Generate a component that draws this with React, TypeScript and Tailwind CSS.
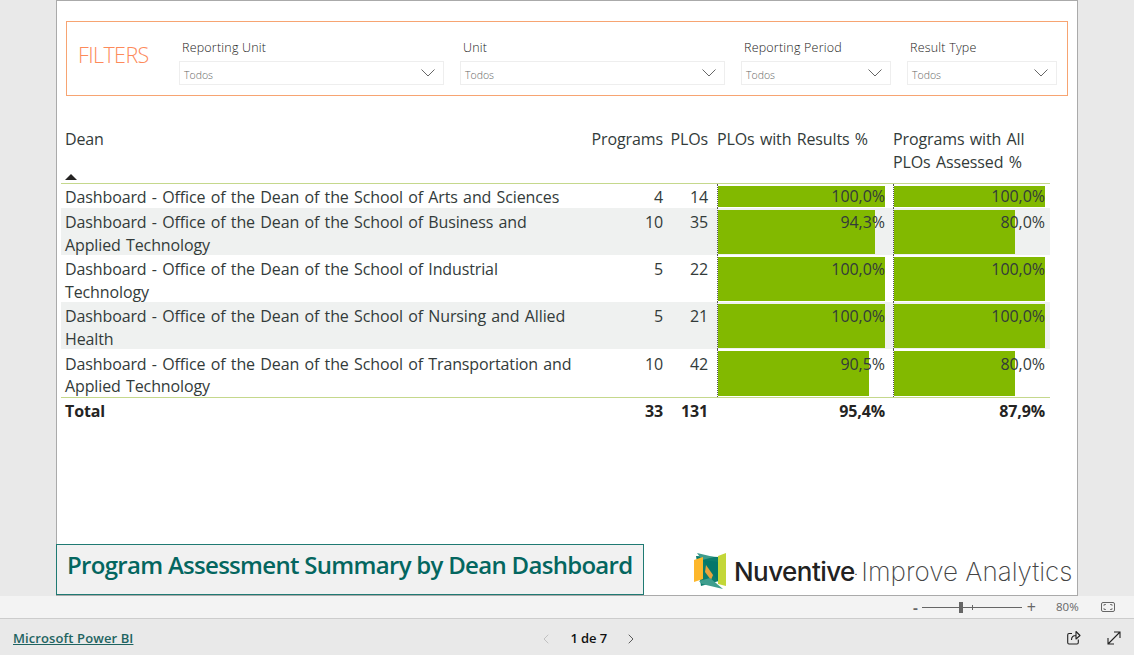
import React from "react";
import { ChevronLeft, ChevronRight } from "lucide-react";

function Slicer({ label, className }: { label: string; className: string }) {
  return (
    <div className={className}>
      <div className="pl-[3px] text-[12.5px] leading-[17px] font-light text-[#252423] h-[25px] pt-[3px] tracking-[0.2px]">{label}</div>
      <div className="h-[24px] border border-[#eeeeee] bg-white flex items-center pl-[4px] pr-[8px] justify-between">
        <span className="text-[10.5px] text-[#666666] font-light pt-[6px]">Todos</span>
        <svg width="14" height="8" viewBox="0 0 14 8"><path d="M0.5 0.5 L7 7 L13.5 0.5" fill="none" stroke="#555" strokeWidth="0.9" /></svg>
      </div>
    </div>
  );
}

function Bar({ pct, text, top }: { pct: number; text: string; top: string }) {
  return (
    <div className="relative h-full pt-[2px] pb-[1px] border-l border-dotted border-[#555555]">
      <div className="h-full bg-[#82b900]" style={{ width: `${pct}%` }} />
      <div className={`absolute inset-x-0 ${top} text-right text-[16px] leading-[25px] text-[#333b3a] tracking-[-0.05px]`}>{text}</div>
    </div>
  );
}

const rows = [
  { name: ["Dashboard - Office of the Dean of the School of Arts and Sciences"], p: "4", l: "14", a: 100, at: "100,0%", b: 100, bt: "100,0%", pad: "pt-[2px]", top: "top-0" },
  { name: ["Dashboard - Office of the Dean of the School of Business and", "Applied Technology"], p: "10", l: "35", a: 94.3, at: "94,3%", b: 80, bt: "80,0%", pad: "pt-[3px]", top: "top-[2px]" },
  { name: ["Dashboard - Office of the Dean of the School of Industrial", "Technology"], p: "5", l: "22", a: 100, at: "100,0%", b: 100, bt: "100,0%", pad: "pt-[3px]", top: "top-[2px]" },
  { name: ["Dashboard - Office of the Dean of the School of Nursing and Allied", "Health"], p: "5", l: "21", a: 100, at: "100,0%", b: 100, bt: "100,0%", pad: "pt-[3px]", top: "top-[2px]" },
  { name: ["Dashboard - Office of the Dean of the School of Transportation and", "Applied Technology"], p: "10", l: "42", a: 90.5, at: "90,5%", b: 80, bt: "80,0%", pad: "pt-[4px]", top: "top-[3px]" },
];

const cols = "grid grid-cols-[530px_72px_45px_9px_168px_8px_152px_5px] grid-rows-[minmax(0,1fr)]";

export default function App() {
  return (
    <div className="w-[1134px] h-[655px] overflow-hidden bg-[#e9e9e9] flex flex-col" style={{ fontFamily: '"Open Sans", sans-serif' }}>
      <div className="h-[596px] px-[56px] shrink-0">
        <div className="h-[596px] w-[1022px] bg-white border border-[#aaaaaa] flex flex-col">
          <div className="mt-[20px] mx-[9px] h-[75px] border border-[#f7a472] flex pl-[11px] pr-[10px] shrink-0">
            <div className="w-[101px] text-[21.5px] font-light text-[#fd8a5a] pt-[18px] leading-[29px] tracking-[-0.6px]">FILTERS</div>
            <div className="flex-1 flex gap-[16px] pt-[14px]">
              <Slicer label="Reporting Unit" className="w-[265px]" />
              <Slicer label="Unit" className="w-[265px]" />
              <Slicer label="Reporting Period" className="w-[150px]" />
              <Slicer label="Result Type" className="w-[150px]" />
            </div>
          </div>

          <div className="mt-[30px] ml-[4px] w-[989px] text-[16px] text-[#333b3a] tracking-[-0.12px] [word-spacing:1.3px]">
            <div className={`${cols} h-[58px] border-b border-[#c5d88c] leading-[23px] relative`}>
              <div className="pl-[4px] pt-[2px]">Dean</div>
              <div className="text-right pt-[2px]">Programs</div>
              <div className="text-right pt-[2px]">PLOs</div>
              <div />
              <div className="pt-[2px] whitespace-nowrap">PLOs with Results %</div>
              <div />
              <div className="pt-[2px] whitespace-nowrap">Programs with All<br />PLOs Assessed %</div>
              <div />
              <svg width="12" height="6" viewBox="0 0 12 6" className="absolute left-[4px] bottom-[3px]"><path d="M0 6 L6 0 L12 6 Z" fill="#252423" /></svg>
            </div>
            {rows.map((r, i) => (
              <div key={i} className={`${cols} ${i % 2 ? "bg-[#eff1f0] " : ""}${i === 0 ? "h-[24px]" : i === 4 ? "h-[48px]" : "h-[47px]"} ${i === 4 ? "leading-[22px]" : "leading-[23px]"}`}>
                <div className={`pl-[4px] ${r.pad} whitespace-nowrap`}>{r.name.map((n, j) => <div key={j}>{n}</div>)}</div>
                <div className={`text-right ${r.pad}`}>{r.p}</div>
                <div className={`text-right ${r.pad}`}>{r.l}</div>
                <div />
                <Bar pct={r.a} text={r.at} top={r.top} />
                <div />
                <Bar pct={r.b} text={r.bt} top={r.top} />
                <div />
              </div>
            ))}
            <div className={`${cols} border-t border-[#c5d88c] h-[27px] pt-[1px] font-bold leading-[25px] text-[#252423]`}>
              <div className="pl-[4px]">Total</div>
              <div className="text-right">33</div>
              <div className="text-right">131</div>
              <div />
              <div className="text-right">95,4%</div>
              <div />
              <div className="text-right">87,9%</div>
              <div />
            </div>
          </div>

          <div className="mt-auto flex items-end -ml-px">
            <div className="w-[588px] h-[51px] bg-[#f1f1f1] border border-[#1f7a73] pl-[10px] pt-[2px] text-[24px] leading-[36px] font-semibold text-[#04665f] tracking-[-0.7px] whitespace-nowrap shrink-0">
              Program Assessment Summary by Dean Dashboard
            </div>
            <div className="flex items-center h-[36px] ml-[50px] mb-[6px]">
              <svg width="32" height="36" viewBox="0 0 32 36" className="shrink-0">
                <path d="M2 3 L25 4 L25 28 L7 33 Z" fill="#0b7d6e" />
                <path d="M3 0 L20 4 L8 7 Z" fill="#3d9c8c" />
                <path d="M0 7 L9 4 L9 26 L0 29 Z" fill="#fdb72b" />
                <path d="M9 7 L24 28 L24 9 Z" fill="#04776b" />
                <path d="M12 12 L19 22 L17 27 L11 19 Z" fill="#e9a33d" />
                <path d="M24 3 L32 0 L32 33 L24 31 Z" fill="#c3d739" />
                <path d="M5 28 L16 25 L29 36 L8 31 Z" fill="#3f9e8e" />
              </svg>
              <span className="ml-[8px] pt-[2px] text-[26px] font-medium text-[#222222] tracking-[-0.55px] leading-[36px]" style={{ fontFamily: "Inter, sans-serif" }}>Nuventive</span>
              <span className="pt-[2px] font-medium text-[#222222] leading-[36px] text-[8px]" style={{ fontFamily: "Inter, sans-serif" }}>.</span>
              <span className="ml-[4px] pt-[2px] text-[26px] font-extralight text-[#444444] tracking-[0.02px] leading-[36px] whitespace-nowrap" style={{ fontFamily: "Inter, sans-serif" }}>Improve Analytics</span>
            </div>
          </div>
        </div>
      </div>

      <div className="h-[23px] bg-[#f3f3f3] border-b border-[#cccccc] flex items-center justify-end shrink-0 text-[#666666] relative">
        <span className="text-[15px] font-bold leading-none">-</span>
        <div className="ml-[4px] w-[100px] h-px bg-[#666666] relative">
          <div className="absolute left-[37px] -top-[5px] w-[4px] h-[11px] bg-[#666666]" />
          <div className="absolute left-[50px] -top-[2px] w-px h-[5px] bg-[#666666]" />
        </div>
        <span className="ml-[5px] text-[16px] leading-none">+</span>
        <span className="ml-[20px] text-[11.5px] w-[24px]">80%</span>
        <svg width="14" height="10" viewBox="0 0 14 10" className="ml-[21px] mr-[19px]">
          <rect x="0.5" y="0.5" width="13" height="9" rx="1.5" fill="none" stroke="#666" />
          <path d="M3 4 V2.5 H5 M9 2.5 H11 V4 M11 6 V7.5 H9 M5 7.5 H3 V6" fill="none" stroke="#666" strokeWidth="0.8" />
        </svg>
      </div>

      <div className="flex-1 flex items-center relative pt-[3px]">
        <a className="ml-[13px] text-[13px] font-semibold text-[#1f6461] underline tracking-[0.1px]">Microsoft Power BI</a>
        <div className="ml-[405px] flex items-center">
          <ChevronLeft size={16} strokeWidth={1.3} className="text-[#bbbbbb]" />
          <span className="ml-[16px] text-[13px] font-semibold text-[#111111] tracking-[-0.1px] w-[38px] whitespace-nowrap">1 de 7</span>
          <ChevronRight size={16} strokeWidth={1.3} className="ml-[15px] text-[#444444]" />
        </div>
        <div className="ml-auto flex items-center mr-[13px] mb-[2px]">
          <svg width="14" height="15" viewBox="0 0 14 15" fill="none" stroke="#222" strokeWidth="1.1">
            <path d="M5 3.5 H2 Q0.7 3.5 0.7 5 V12.5 Q0.7 14 2 14 H10 Q11.3 14 11.3 12.5 V9.5" />
            <path d="M4.5 10 C4.5 7 6.5 5.5 9 5.5 M9 1.5 L13 5.5 L9 9 Z" strokeLinejoin="round" />
          </svg>
          <svg width="14" height="14" viewBox="0 0 14 14" fill="none" stroke="#222" strokeWidth="1.1" className="ml-[26px]">
            <path d="M1 13 L13 1 M7 1 H13 V7 M1 7 V13 H7" />
          </svg>
        </div>
      </div>
    </div>
  );
}
